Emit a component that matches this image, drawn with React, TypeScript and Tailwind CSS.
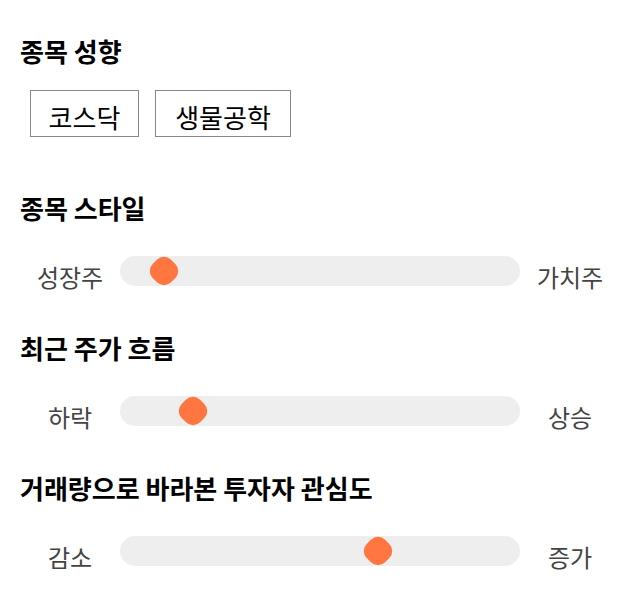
import React from "react";

const font = { fontFamily: '"Noto Sans CJK KR", "Noto Sans", sans-serif' };

function Heading({ children }: { children: React.ReactNode }) {
  return <h2 className="px-5 text-[26px] font-bold leading-[30px]">{children}</h2>;
}

function Slider({ left, right, value }: { left: string; right: string; value: number }) {
  return (
    <div className="flex items-center h-[30px] px-5">
      <div className="w-[100px] shrink-0 text-center text-[24px] text-[#444] leading-none pt-[12px]">{left}</div>
      <div className="relative flex-1 h-[30px] rounded-full bg-[#eeeeee]">
        <div
          className="absolute top-[2px] -ml-[13px] w-[26px] h-[26px] rotate-45 rounded-[10px] bg-[#ff7640]"
          style={{ left: `${value}%` }}
        />
      </div>
      <div className="w-[100px] shrink-0 text-center text-[24px] text-[#444] leading-none pt-[12px]">{right}</div>
    </div>
  );
}

function SliderSection({ title, left, right, value }: { title: string; left: string; right: string; value: number }) {
  return (
    <section className="flex flex-col gap-[33px]">
      <Heading>{title}</Heading>
      <Slider left={left} right={right} value={value} />
    </section>
  );
}

export default function App() {
  return (
    <div className="w-[640px] h-[606px] bg-white text-black pt-[36px] flex flex-col gap-[47px]" style={font}>
      <section className="flex flex-col gap-6 pb-[9px]">
        <Heading>종목 성향</Heading>
        <div className="flex gap-4 pl-[30px]">
          <div className="border border-[#888] h-[47px] w-[109px] flex items-center justify-center text-[26px] leading-none pt-[6px]">
            코스닥
          </div>
          <div className="border border-[#888] h-[47px] w-[136px] flex items-center justify-center text-[26px] leading-none pt-[6px]">
            생물공학
          </div>
        </div>
      </section>
      <SliderSection title="종목 스타일" left="성장주" right="가치주" value={11} />
      <SliderSection title="최근 주가 흐름" left="하락" right="상승" value={18.25} />
      <SliderSection title="거래량으로 바라본 투자자 관심도" left="감소" right="증가" value={64.5} />
    </div>
  );
}
